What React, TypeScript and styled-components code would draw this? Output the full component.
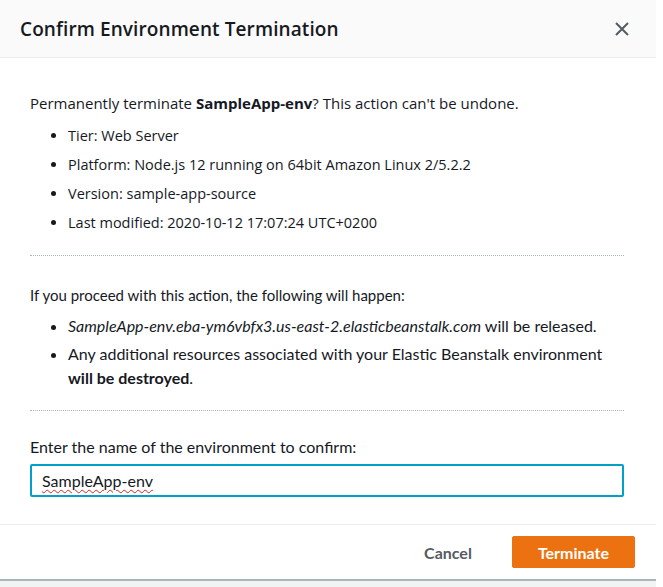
import React, { FC } from 'react';
import styled, { createGlobalStyle } from 'styled-components';

const GlobalStyle = createGlobalStyle`
    html, body {
        margin: 0;
        padding: 0;
        background: #ffffff;
    }
    body {
        width: 663px;
        height: 587px;
        overflow: hidden;
        font-family: 'Open Sans', 'Noto Sans', sans-serif;
        color: #16191f;
    }
`;

const Page = styled.div`
    width: 656px;
    display: flex;
    flex-direction: column;
`;

const Modal = styled.div`
    background: #ffffff;
    border-bottom: 2px solid #aab7b8;
    display: flex;
    flex-direction: column;
`;

const Header = styled.div`
    height: 58px;
    box-sizing: border-box;
    background: #fafafa;
    border-bottom: 1px solid #eaeded;
    display: flex;
    align-items: center;
    justify-content: space-between;
    padding: 0 22px 0 20px;
`;

const Title = styled.h2`
    margin: 0;
    font-family: 'Open Sans', sans-serif;
    font-size: 19px;
    font-weight: 600;
    letter-spacing: 0.1px;
    color: #16191f;
`;

const CloseButton = styled.button`
    border: none;
    background: none;
    padding: 0;
    width: 24px;
    height: 24px;
    display: flex;
    align-items: center;
    justify-content: center;
    cursor: pointer;
`;

const Body = styled.div`
    padding: 34px 32px 0 30px;
`;

const Section = styled.div<{ $ember?: boolean }>`
    font-family: ${({ $ember }) => ($ember ? "'Lato', sans-serif" : "'Open Sans', sans-serif")};
    font-size: ${({ $ember }) => ($ember ? '16px' : '14.5px')};
    line-height: ${({ $ember }) => ($ember ? '24px' : '22px')};
    padding-bottom: ${({ $ember }) => ($ember ? '20px' : '21px')};
    border-bottom: 1px dotted #aab7b8;
    margin-bottom: ${({ $ember }) => ($ember ? '25px' : '27px')};
`;

const Lead = styled.p<{ $size: number; $gap: number }>`
    margin: 0 0 ${({ $gap }) => $gap}px;
    font-size: ${({ $size }) => $size}px;
`;

const List = styled.ul<{ $gap: number }>`
    margin: 0;
    padding-left: 38px;
    display: flex;
    flex-direction: column;
    gap: ${({ $gap }) => $gap}px;
`;

const Label = styled.label`
    display: block;
    font-family: 'Lato', sans-serif;
    font-size: 16px;
    line-height: 22px;
    margin-bottom: 6px;
`;

const Field = styled.div`
    height: 33px;
    box-sizing: border-box;
    border: 2px solid #00a1c9;
    border-radius: 2px;
    display: flex;
    align-items: center;
    padding: 0 10px;
    font-family: 'Lato', sans-serif;
    font-size: 16px;
`;

const Misspelled = styled.span`
    text-decoration: underline wavy #e02020;
    text-decoration-thickness: 1px;
    text-underline-offset: 2px;
`;

const Footer = styled.div`
    margin-top: 27px;
    border-top: 1px solid #eaeded;
    height: 54px;
    display: flex;
    align-items: center;
    justify-content: flex-end;
    gap: 19px;
    padding: 0 21px 0 0;
`;

const Button = styled.button<{ $primary?: boolean }>`
    font-family: 'Lato', sans-serif;
    font-weight: 700;
    font-size: 16px;
    height: 32px;
    border-radius: 2px;
    border: 1px solid ${({ $primary }) => ($primary ? '#ec7211' : 'transparent')};
    background: ${({ $primary }) => ($primary ? '#ec7211' : 'transparent')};
    color: ${({ $primary }) => ($primary ? '#ffffff' : '#545b64')};
    padding: 0 ${({ $primary }) => ($primary ? '25px' : '20px')};
    cursor: pointer;
`;

const Backdrop = styled.div`
    height: 20px;
    background: #f2f3f3;
`;

const App: FC = () => (
    <>
        <GlobalStyle />
        <Page>
            <Modal>
                <Header>
                    <Title>Confirm Environment Termination</Title>
                    <CloseButton aria-label="Close">
                        <svg width="16" height="16" viewBox="0 0 16 16">
                            <path d="M2 2 L14 14 M14 2 L2 14" stroke="#545b64" strokeWidth="2" fill="none" />
                        </svg>
                    </CloseButton>
                </Header>
                <Body>
                    <Section>
                        <Lead $size={15} $gap={11}>
                            Permanently terminate <b>SampleApp-env</b>? This action can't be undone.
                        </Lead>
                        <List $gap={7}>
                            <li>Tier: Web Server</li>
                            <li>Platform: Node.js 12 running on 64bit Amazon Linux 2/5.2.2</li>
                            <li>Version: sample-app-source</li>
                            <li>Last modified: 2020-10-12 17:07:24 UTC+0200</li>
                        </List>
                    </Section>
                    <Section $ember>
                        <Lead $size={15} $gap={7}>
                            If you proceed with this action, the following will happen:
                        </Lead>
                        <List $gap={4}>
                            <li>
                                <i>SampleApp-env.eba-ym6vbfx3.us-east-2.elasticbeanstalk.com</i> will be released.
                            </li>
                            <li>
                                Any additional resources associated with your Elastic Beanstalk environment{' '}
                                <b>will be destroyed</b>.
                            </li>
                        </List>
                    </Section>
                    <Label>Enter the name of the environment to confirm:</Label>
                    <Field>
                        <Misspelled>SampleApp-env</Misspelled>
                    </Field>
                </Body>
                <Footer>
                    <Button>Cancel</Button>
                    <Button $primary>Terminate</Button>
                </Footer>
            </Modal>
            <Backdrop />
        </Page>
    </>
);

export default App;
